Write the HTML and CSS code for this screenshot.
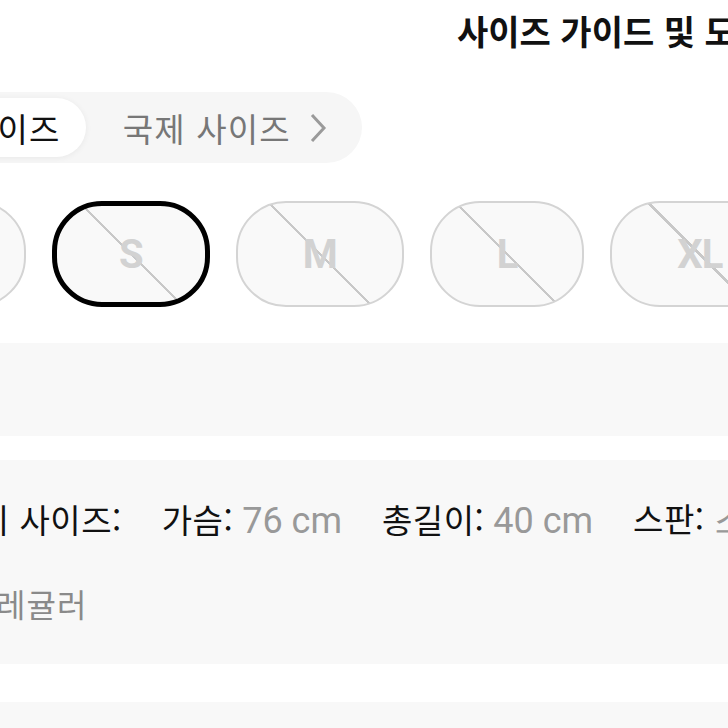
FILE: index.html
```html
<!DOCTYPE html>
<html lang="ko">
<head>
    <meta charset="UTF-8">
    <title>사이즈 가이드</title>
    <meta name="viewport" content="width=device-width, initial-scale=1.0">
    <link rel="stylesheet" href="styles.css">
</head>
<body>
    <div class="sheet">
        <h1 class="title">사이즈 가이드 및 도움말</h1>

        <div class="tabs">
            <div class="tab active">사이즈</div>
            <div class="tab">
                국제 사이즈
                <svg class="chevron" width="18" height="30" viewBox="0 0 18 30">
                    <polyline points="3,2 15,15 3,28" fill="none" stroke="#9a9a9a" stroke-width="3"/>
                </svg>
            </div>
        </div>

        <div class="sizes">
            <div class="chip">XS</div>
            <div class="chip selected">S</div>
            <div class="chip">M</div>
            <div class="chip">L</div>
            <div class="chip">XL</div>
        </div>

        <div class="band empty"></div>

        <div class="band info">
            <div class="row">
                <span class="item"><span class="label">아이 사이즈:</span></span>
                <span class="item"><span class="label">가슴:</span><span class="value">76 cm</span></span>
                <span class="item"><span class="label">총길이:</span><span class="value">40 cm</span></span>
                <span class="item"><span class="label">스판:</span><span class="value">스판 없음</span></span>
            </div>
            <div class="row fit">
                <span class="value-kr">레귤러</span>
            </div>
        </div>

        <div class="band next"></div>
    </div>
</body>
</html>
```

FILE: styles.css
```css
* {
    margin: 0;
    padding: 0;
    box-sizing: border-box;
}
html, body {
    width: 728px;
    height: 728px;
    overflow: hidden;
    background: #fff;
}
body {
    font-family: "Noto Sans CJK KR", "Noto Sans", sans-serif;
    color: #111;
}
.sheet {
    width: 728px;
    overflow: hidden;
}
.title {
    height: 64px;
    line-height: 62px;
    padding-left: 457px;
    font-size: 34px;
    font-weight: 700;
    white-space: nowrap;
    color: #111;
}

/* tabs */
.tabs {
    display: inline-flex;
    align-items: center;
    margin-top: 28px;
    margin-left: -65px;
    padding: 6px 35px 6px 6px;
    background: #f6f6f6;
    border-radius: 36px;
}
.tab {
    display: flex;
    align-items: center;
    height: 59px;
    font-size: 33px;
    letter-spacing: 1.2px;
    color: #777;
    white-space: nowrap;
}
.tab.active {
    padding: 0 25px;
    background: #fff;
    color: #111;
    border-radius: 30px;
    box-shadow: 0 1px 6px rgba(0, 0, 0, 0.06);
    margin-right: 37px;
}
.chevron {
    margin-left: 18px;
}

/* size chips */
.sizes {
    display: flex;
    gap: 26px;
    margin-top: 38px;
    margin-left: -156px;
}
.chip {
    flex: none;
    height: 106px;
    padding: 0 65px;
    display: flex;
    align-items: center;
    justify-content: center;
    border: 2.5px solid #d4d4d4;
    border-radius: 50px;
    background-color: #f9f9f9;
    background-image: linear-gradient(45deg, transparent calc(50% - 1.2px), #c8c8c8 calc(50% - 1.2px), #c8c8c8 calc(50% + 1.2px), transparent calc(50% + 1.2px));
    font-family: Roboto, "Liberation Sans", sans-serif;
    font-size: 40px;
    font-weight: 700;
    color: #d2d2d2;
    letter-spacing: -1px;
}
.chip.xs {
    padding: 0 60px;
}
.chip.selected {
    border: 5px solid #000;
    padding: 0 62px;
}

/* grey bands */
.band {
    background: #f8f8f8;
    margin-left: -40px;
    width: 808px;
}
.band.empty {
    margin-top: 36px;
    height: 93px;
}
.band.info {
    margin-top: 24px;
    height: 204px;
    padding-top: 34px;
    display: flex;
    flex-direction: column;
    gap: 34px;
}
.band.next {
    margin-top: 38px;
    height: 60px;
}
.row {
    display: flex;
    gap: 40px;
    height: 50px;
    align-items: center;
    white-space: nowrap;
    margin-left: -12px;
}
.label {
    font-size: 33px;
    letter-spacing: 0.5px;
    color: #111;
}
.value {
    margin-left: 9px;
    font-family: Roboto, "Liberation Sans", sans-serif;
    font-size: 36px;
    color: #999;
}
.row.fit {
    margin-left: 36px;
}
.value-kr {
    font-size: 32px;
    letter-spacing: 1px;
    color: #8a8a8a;
}
```
